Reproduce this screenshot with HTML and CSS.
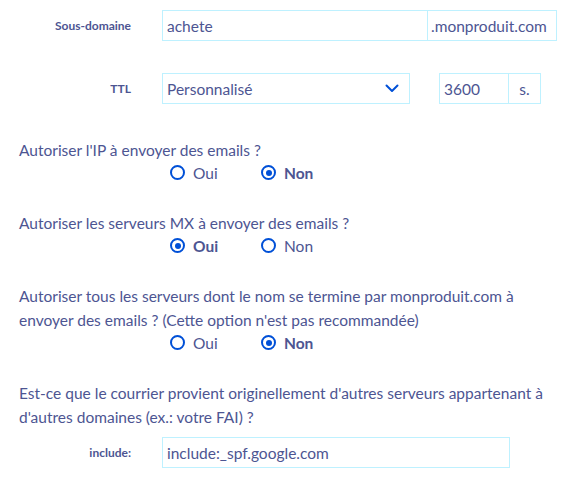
FILE: index.html
```html
<!DOCTYPE html>
<html lang="fr">
<head>
<meta charset="utf-8">
<link rel="stylesheet" href="styles.css">
</head>
<body>
<div class="page">
  <div class="field-row row-sub">
    <label class="field-label">Sous-domaine</label>
    <div class="group">
      <div class="input w-sub">achete</div>
      <div class="addon w-suffix">.monproduit.com</div>
    </div>
  </div>
  <div class="field-row row-ttl">
    <label class="field-label">TTL</label>
    <div class="input select w-select">
      <span>Personnalisé</span>
      <svg class="chevron" width="14" height="9" viewBox="0 0 14 9"><path d="M1.5 1.5 L7 7 L12.5 1.5" fill="none" stroke="#0050d7" stroke-width="2" stroke-linecap="round" stroke-linejoin="round"/></svg>
    </div>
    <div class="group ttl-group">
      <div class="input w-num">3600</div>
      <div class="addon w-unit">s.</div>
    </div>
  </div>

  <div class="question q1">
    <p class="q-text">Autoriser l'IP à envoyer des emails ?</p>
    <div class="radios">
      <span class="radio"><span class="dot"></span><span>Oui</span></span>
      <span class="radio checked"><span class="dot"></span><span>Non</span></span>
    </div>
  </div>

  <div class="question q2">
    <p class="q-text">Autoriser les serveurs MX à envoyer des emails ?</p>
    <div class="radios">
      <span class="radio checked"><span class="dot"></span><span>Oui</span></span>
      <span class="radio"><span class="dot"></span><span>Non</span></span>
    </div>
  </div>

  <div class="question q3">
    <p class="q-text">Autoriser tous les serveurs dont le nom se termine par monproduit.com à<br>envoyer des emails ? (Cette option n'est pas recommandée)</p>
    <div class="radios">
      <span class="radio"><span class="dot"></span><span>Oui</span></span>
      <span class="radio checked"><span class="dot"></span><span>Non</span></span>
    </div>
  </div>

  <div class="question q4">
    <p class="q-text">Est-ce que le courrier provient originellement d'autres serveurs appartenant à<br>d'autres domaines (ex.: votre FAI) ?</p>
  </div>
  <div class="field-row row-include">
    <label class="field-label">include:</label>
    <div class="input w-include">include:_spf.google.com</div>
  </div>
</div>
</body>
</html>
```

FILE: styles.css
```css
html, body {
  margin: 0;
  padding: 0;
  background: #ffffff;
}
body {
  font-family: Lato, "Open Sans", sans-serif;
  color: #4d5592;
}
.page {
  padding: 10px 0 0 19px;
  width: 548px;
}
.field-row {
  display: flex;
  align-items: center;
  margin-left: -19px;
}
.row-ttl {
  margin-top: 32px;
}
.row-include {
  margin-top: 8px;
}
.field-label {
  width: 131px;
  text-align: right;
  font-weight: 700;
  font-size: 12px;
  margin-right: 31px;
  color: #4d5592;
}
.group {
  display: flex;
}
.input, .addon {
  box-sizing: border-box;
  height: 31px;
  border: 1px solid #bef1ff;
  font-size: 15.5px;
  display: flex;
  align-items: center;
  padding: 0 4px;
  color: #4d5592;
}
.addon {
  border-left: none;
  padding: 0 3px;
}
.w-sub { width: 266px; }
.w-suffix { width: 129px; }
.w-select {
  width: 248px;
  justify-content: space-between;
  padding-right: 10px;
}
.ttl-group {
  margin-left: 29px;
}
.w-num { width: 70px; }
.w-unit { width: 32px; justify-content: center; }
.w-include { width: 348px; }
.question {
  margin-top: 28px;
}
.q1 {
  margin-top: 34px;
}
.q-text {
  margin: 0;
  font-size: 15.5px;
  line-height: 24px;
}
.radios {
  display: flex;
  padding-left: 151px;
  height: 21px;
  align-items: center;
}
.radio {
  display: flex;
  align-items: center;
  width: 91px;
  font-size: 15.5px;
}
.dot {
  box-sizing: border-box;
  width: 15px;
  height: 15px;
  border: 2px solid #0050d7;
  border-radius: 50%;
  margin-right: 8px;
  position: relative;
}
.radio.checked {
  font-weight: 700;
}
.radio.checked .dot::after {
  content: "";
  position: absolute;
  left: 2.5px;
  top: 2.5px;
  width: 6px;
  height: 6px;
  border-radius: 50%;
  background: #0050d7;
}
```
